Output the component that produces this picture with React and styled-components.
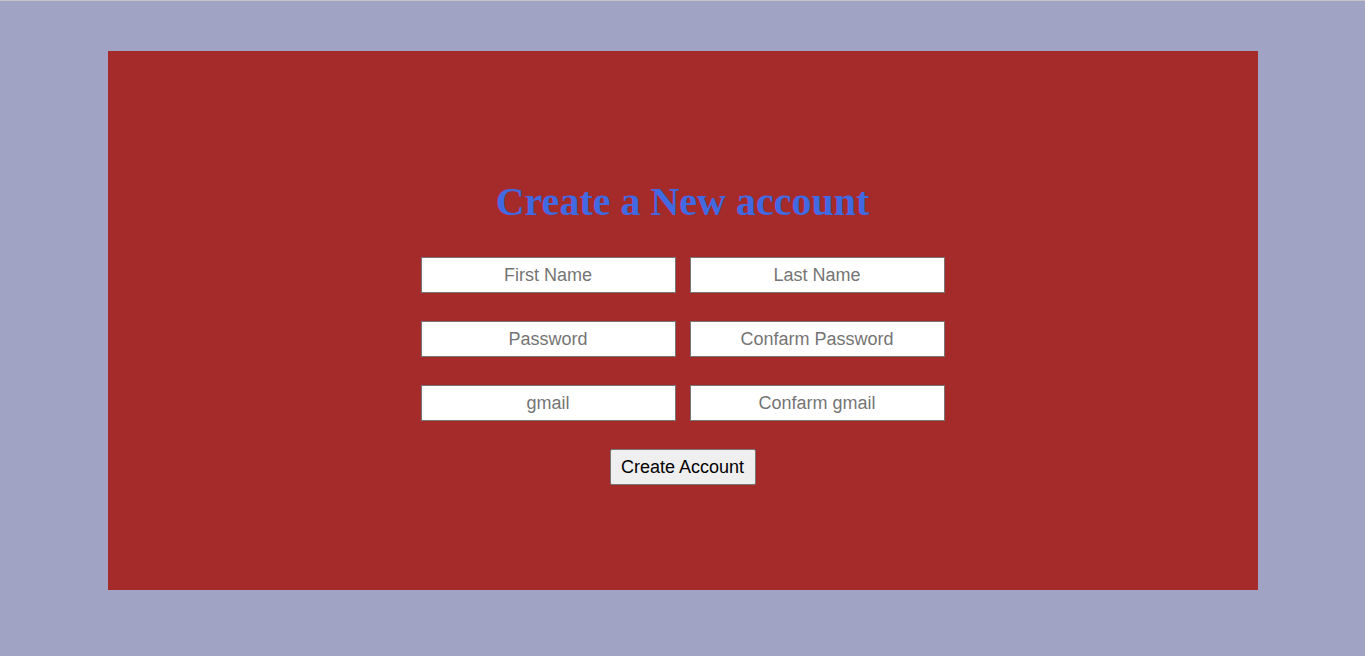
import styled, { createGlobalStyle } from "styled-components";

const GlobalStyle = createGlobalStyle`
  html, body {
    margin: 0;
    padding: 0;
  }
  body {
    background-color: #a1a3c5;
    border-top: 1px solid #c4c4c4;
    font-family: "Liberation Sans", Arial, sans-serif;
  }
`;

const Page = styled.div`
  min-height: 655px;
  box-sizing: border-box;
  padding-top: 50px;
  display: flex;
  justify-content: center;
  align-items: flex-start;
`;

const Card = styled.div`
  width: 1150px;
  height: 539px;
  background-color: #a52a2a;
  display: flex;
  flex-direction: column;
  align-items: center;
  box-sizing: border-box;
  padding-top: 128px;
`;

const Title = styled.h1`
  margin: 0 0 32px;
  font-family: "Liberation Serif", "Times New Roman", serif;
  font-size: 40px;
  line-height: 46px;
  font-weight: bold;
  color: #4169e1;
`;

const Form = styled.form`
  display: flex;
  flex-direction: column;
  align-items: center;
  gap: 28px;
`;

const Row = styled.div`
  display: flex;
  gap: 14px;
`;

const Field = styled.input`
  width: 255px;
  height: 36px;
  box-sizing: border-box;
  border: 1px solid #767676;
  border-radius: 0;
  background: #fff;
  padding: 0 4px;
  font-family: "Liberation Sans", Arial, sans-serif;
  font-size: 18px;
  text-align: center;
  color: #000;
  outline: none;

  &::placeholder {
    color: #757575;
  }
`;

const Button = styled.button`
  width: 146px;
  height: 36px;
  box-sizing: border-box;
  padding: 0;
  border: 1px solid #767676;
  border-radius: 2px;
  background-color: #efefef;
  font-family: "Liberation Sans", Arial, sans-serif;
  font-size: 18px;
  color: #000;
`;

const rows = [
  ["First Name", "Last Name"],
  ["Password", "Confarm Password"],
  ["gmail", "Confarm gmail"],
];

export default function App() {
  return (
    <>
      <GlobalStyle />
      <Page>
        <Card>
          <Title>Create a New account</Title>
          <Form onSubmit={(e) => e.preventDefault()}>
            {rows.map(([a, b]) => (
              <Row key={a}>
                <Field placeholder={a} />
                <Field placeholder={b} />
              </Row>
            ))}
            <Button type="submit">Create Account</Button>
          </Form>
        </Card>
      </Page>
    </>
  );
}
